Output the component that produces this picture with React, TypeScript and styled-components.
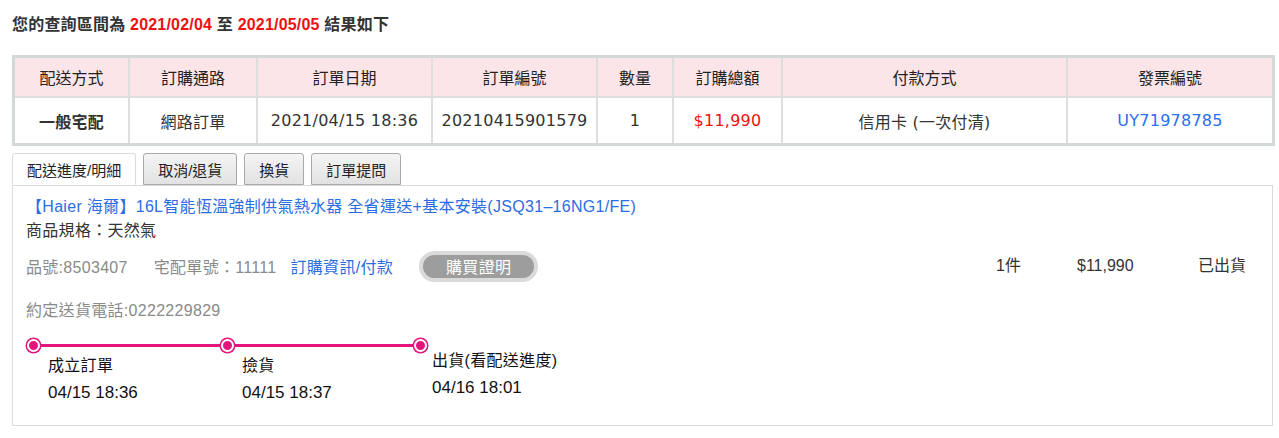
import styled, { createGlobalStyle } from "styled-components"

const GlobalStyle = createGlobalStyle`
    body {
        margin: 0;
        background: #fff;
        font-family: 'Liberation Sans', 'Noto Sans CJK TC', sans-serif;
        color: #333;
    }
`

const Page = styled.div`
    padding: 14px 4px 0 12px;
`

const Summary = styled.div`
    font-size: 16px;
    font-weight: 700;
    line-height: 22px;
    letter-spacing: 0.2px;
    color: #333;
    margin-bottom: 19px;
`

const Red = styled.span`
    color: #ee1111;
`

const TableFrame = styled.div`
    border: 3px solid #d3d8d9;
`

const Table = styled.table`
    width: 100%;
    border-collapse: collapse;
    table-layout: fixed;
    font-family: 'DejaVu Sans', 'Noto Sans CJK TC', sans-serif;
    font-size: 16px;

    th, td {
        border: 2px solid #dedede;
        text-align: center;
        padding: 0;
    }
    tr:first-child th { border-top: none; }
    tr:last-child td { border-bottom: none; }
    th:first-child, td:first-child { border-left: none; }
    th:last-child, td:last-child { border-right: none; }
`

const HeadCell = styled.th`
    height: 38px;
    background: #fbe5e8;
    font-weight: 400;
    color: #222;
`

const Cell = styled.td<{ $tone?: "red" | "blue"; $bold?: boolean }>`
    height: 45px;
    letter-spacing: 0.25px;
    color: ${ p => p.$tone === "red" ? "#ee1111" : p.$tone === "blue" ? "#2b6ef0" : "#333" };
    font-weight: ${ p => p.$bold ? 700 : 400 };
    font-family: ${ p => p.$bold ? "'Noto Sans CJK TC', sans-serif" : "inherit" };
`

const TabBar = styled.div`
    display: flex;
    gap: 7px;
    margin-top: 7px;
    margin-right: 2px;
    position: relative;
    z-index: 1;
`

const Tab = styled.div<{ $active?: boolean }>`
    height: 30px;
    padding: 0 14px;
    display: flex;
    align-items: center;
    font-size: 15px;
    color: #222;
    border: 1px solid ${ p => p.$active ? "#dcdcdc" : "#a9a9a9" };
    border-bottom: ${ p => p.$active ? "1px solid #fff" : "1px solid #a9a9a9" };
    border-radius: 3px 3px 0 0;
    background: ${ p => p.$active ? "#fff" : "linear-gradient(#f4f4f4, #e2e2e2)" };
    margin-bottom: ${ p => p.$active ? "-1px" : "0" };
`

const Panel = styled.div`
    border: 1px solid #dcdcdc;
    margin-right: 2px;
    padding: 9px 13px 20px 13px;
    letter-spacing: 0.3px;
`

const Line = styled.div<{ $tone?: "link" | "muted" }>`
    font-size: 16px;
    line-height: 24px;
    color: ${ p => p.$tone === "link" ? "#2b6de2" : p.$tone === "muted" ? "#8a8a8a" : "#333" };
`

const InfoRow = styled.div`
    display: flex;
    align-items: center;
    height: 32px;
    margin-top: 7px;
    font-size: 16px;
`

const Muted = styled.span<{ $gap?: number }>`
    color: #8a8a8a;
    margin-right: ${ p => p.$gap ?? 24 }px;
`

const Link = styled.span`
    color: #2b6de2;
    margin-right: 26px;
`

const ProofButton = styled.div`
    height: 31px;
    box-sizing: border-box;
    padding: 0 23px;
    border-radius: 16px;
    background: #9d9d9d;
    border: 4px solid #dadada;
    color: #fff;
    font-size: 16px;
    display: flex;
    align-items: center;
`

const Figures = styled.div`
    margin-left: auto;
    display: flex;
    align-items: center;
    font-size: 16px;
    line-height: 24px;
    letter-spacing: 0;
    color: #333;
`

const Figure = styled.span<{ $w: number }>`
    width: ${ p => p.$w }px;
`

const Phone = styled(Line)`
    margin-top: 17px;
`

const Timeline = styled.div`
    display: flex;
    margin-top: 15px;
`

const Step = styled.div<{ $w?: number }>`
    width: ${ p => p.$w ? `${ p.$w }px` : "auto" };
    display: flex;
    flex-direction: column;
`

const Track = styled.div`
    display: flex;
    align-items: center;
    height: 15px;
`

const Dot = styled.div`
    width: 9px;
    height: 9px;
    flex: none;
    border-radius: 50%;
    background: #e5157f;
    border: 2px solid #fff;
    box-shadow: 0 0 0 1.5px #e5157f;
    margin: 0 1px;
`

const Segment = styled.div`
    flex: 1;
    height: 3px;
    background: #e5157f;
`

const StepText = styled.div<{ $raised?: boolean; $indent: number }>`
    padding-left: ${ p => p.$indent }px;
    margin-top: ${ p => p.$raised ? -4 : 1 }px;
`

const StepTitle = styled.div`
    font-size: 16px;
    line-height: 24px;
    color: #111;
`

const StepTime = styled.div`
    font-size: 17px;
    line-height: 24px;
    letter-spacing: 0;
    color: #111;
    margin-top: 3px;
`

const columns = [114, 128, 175, 165, 76, 109, 285, 205]
const heads = ["配送方式", "訂購通路", "訂單日期", "訂單編號", "數量", "訂購總額", "付款方式", "發票編號"]

const steps = [
    { title: "成立訂單", time: "04/15 18:36", width: 194, indent: 22 },
    { title: "撿貨", time: "04/15 18:37", width: 193, indent: 22 },
    { title: "出貨(看配送進度)", time: "04/16 18:01", indent: 19, raised: true },
]

export default function App() {
    return (
        <>
            <GlobalStyle />
            <Page>
                <Summary>
                    您的查詢區間為 <Red>2021/02/04</Red> 至 <Red>2021/05/05</Red> 結果如下
                </Summary>

                <TableFrame>
                    <Table>
                        <colgroup>
                            { columns.map((w, i) => <col key={ i } style={{ width: w }} />) }
                        </colgroup>
                        <thead>
                            <tr>
                                { heads.map(h => <HeadCell key={ h }>{ h }</HeadCell>) }
                            </tr>
                        </thead>
                        <tbody>
                            <tr>
                                <Cell $bold>一般宅配</Cell>
                                <Cell>網路訂單</Cell>
                                <Cell>2021/04/15 18:36</Cell>
                                <Cell>20210415901579</Cell>
                                <Cell>1</Cell>
                                <Cell $tone="red">$11,990</Cell>
                                <Cell>信用卡 (一次付清)</Cell>
                                <Cell $tone="blue">UY71978785</Cell>
                            </tr>
                        </tbody>
                    </Table>
                </TableFrame>

                <TabBar>
                    <Tab $active>配送進度/明細</Tab>
                    <Tab>取消/退貨</Tab>
                    <Tab>換貨</Tab>
                    <Tab>訂單提問</Tab>
                </TabBar>

                <Panel>
                    <Line $tone="link">【Haier 海爾】16L智能恆溫強制供氣熱水器 全省運送+基本安裝(JSQ31–16NG1/FE)</Line>
                    <Line>商品規格：天然氣</Line>

                    <InfoRow>
                        <Muted $gap={ 26 }>品號:8503407</Muted>
                        <Muted $gap={ 14 }>宅配單號：11111</Muted>
                        <Link>訂購資訊/付款</Link>
                        <ProofButton>購買證明</ProofButton>
                        <Figures>
                            <Figure $w={ 81 }>1件</Figure>
                            <Figure $w={ 121 }>$11,990</Figure>
                            <Figure $w={ 61 }>已出貨</Figure>
                        </Figures>
                    </InfoRow>

                    <Phone $tone="muted">約定送貨電話:0222229829</Phone>

                    <Timeline>
                        { steps.map((s, i) => (
                            <Step key={ s.title } $w={ s.width }>
                                <Track>
                                    <Dot />
                                    { i < steps.length - 1 && <Segment /> }
                                </Track>
                                <StepText $indent={ s.indent } $raised={ s.raised }>
                                    <StepTitle>{ s.title }</StepTitle>
                                    <StepTime>{ s.time }</StepTime>
                                </StepText>
                            </Step>
                        )) }
                    </Timeline>
                </Panel>
            </Page>
        </>
    )
}
